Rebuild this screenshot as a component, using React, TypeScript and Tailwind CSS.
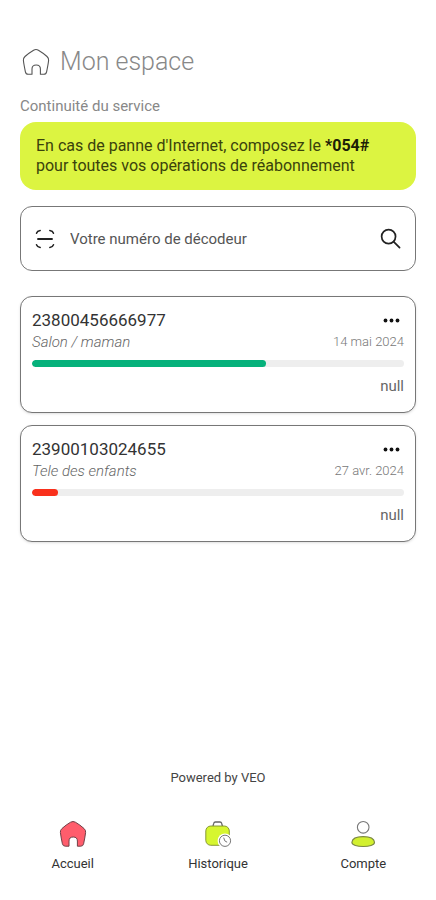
import { useState } from 'react';

interface Decoder {
  id: string;
  label: string;
  date: string;
  offer: string;
  progress: number;
  barClass: string;
}

const decoders: Decoder[] = [
  {
    id: '23800456666977',
    label: 'Salon / maman',
    date: '14 mai 2024',
    offer: 'null',
    progress: 63,
    barClass: 'bg-[#06b17b]',
  },
  {
    id: '23900103024655',
    label: 'Tele des enfants',
    date: '27 avr. 2024',
    offer: 'null',
    progress: 7,
    barClass: 'bg-[#f9301c]',
  },
];

function HomeIcon({ className, filled = false }: { className?: string; filled?: boolean }) {
  return (
    <svg viewBox="0 0 28 28" className={className} fill="none" aria-hidden="true">
      <path
        d="M11.6 2.2 Q14 0.8 16.4 2.2 C19.5 4 22.5 6.2 25 8.5 Q27 10.3 26.6 12.5 C26.2 16 25.4 20 24.6 23.8 Q24.1 26.2 21.7 26.2 H18.4 V21 Q18.4 17 14.2 17 Q10 17 10 21 V26.2 H6.3 Q3.9 26.2 3.4 23.8 C2.6 20 1.8 16 1.4 12.5 Q1 10.3 3 8.5 C5.5 6.2 8.5 4 11.6 2.2 Z"
        fill={filled ? '#ff5d6c' : 'none'}
        stroke={filled ? '#704047' : '#555555'}
        strokeWidth={filled ? 1 : 1.1}
        strokeLinejoin="round"
      />
    </svg>
  );
}

function HistoryIcon({ className }: { className?: string }) {
  return (
    <svg viewBox="0 0 28 28" className={className} fill="none" aria-hidden="true">
      <path d="M9 6 L9.8 3.2 Q10.1 2 11.4 2 H16 Q17.3 2 17.6 3.2 L18.4 6" stroke="#666666" strokeWidth="1.3" />
      <rect x="1.8" y="6" width="23.5" height="19.3" rx="5" fill="#d6f62f" stroke="#7d8d2b" strokeWidth="0.9" />
      <circle cx="21" cy="20.8" r="7.4" fill="#ffffff" />
      <circle cx="21" cy="20.8" r="5.6" fill="#ffffff" stroke="#777777" strokeWidth="1" />
      <path d="M19.8 18 L20.8 20.9 L22.8 22" stroke="#777777" strokeWidth="1" strokeLinecap="round" />
    </svg>
  );
}

function AccountIcon({ className }: { className?: string }) {
  return (
    <svg viewBox="0 0 28 28" className={className} fill="none" aria-hidden="true">
      <circle cx="14.2" cy="7.3" r="5.8" stroke="#777777" strokeWidth="1.1" />
      <path
        d="M2.9 22.3 C3.2 18.3 8.5 16.6 14.2 16.6 C19.9 16.6 25.2 18.3 25.5 22.3 C25.6 25.3 20 26.5 14.2 26.5 C8.4 26.5 2.8 25.3 2.9 22.3 Z"
        fill="#d2f02f"
        stroke="#7b8745"
        strokeWidth="1.1"
      />
    </svg>
  );
}

function ScanIcon({ className }: { className?: string }) {
  return (
    <svg viewBox="0 0 20 20" className={className} fill="none" stroke="#222222" strokeLinecap="round" aria-hidden="true">
      <g strokeWidth="1.5">
        <path d="M1.5 4.2 Q2.2 2 5.2 1.5" />
        <path d="M14.8 1.5 Q17.8 2 18.5 4.2" />
        <path d="M1.5 15.8 Q2.2 18 5.2 18.5" />
        <path d="M14.8 18.5 Q17.8 18 18.5 15.8" />
      </g>
      <path d="M3 10 H17" strokeWidth="1.9" />
    </svg>
  );
}

function DecoderCard({ decoder }: { decoder: Decoder }) {
  return (
    <li className="rounded-xl border border-[#777777] bg-white px-[11px] pt-[11px] pb-4 shadow-sm">
      <div className="flex items-center justify-between">
        <h2 className="text-[17px] leading-6 text-[#333333]">{decoder.id}</h2>
        <button type="button" aria-label="Options" className="flex h-6 items-center pr-1">
          <svg viewBox="0 0 17 5" className="h-[5px] w-[17px] fill-[#111111]" aria-hidden="true">
            <circle cx="2.5" cy="2.5" r="1.9" />
            <circle cx="8.5" cy="2.5" r="1.9" />
            <circle cx="14.5" cy="2.5" r="1.9" />
          </svg>
        </button>
      </div>
      <div className="flex items-center justify-between">
        <p className="text-[15px] leading-5 font-light text-[#666666] italic">{decoder.label}</p>
        <p className="text-[13px] leading-5 font-light text-[#777777]">{decoder.date}</p>
      </div>
      <div className="mt-2 h-[7px] overflow-hidden rounded-full bg-[#eeeeee]">
        <div className={`h-full rounded-full ${decoder.barClass}`} style={{ width: `${decoder.progress}%` }} />
      </div>
      <p className="mt-[9px] text-right text-[15px] leading-5 text-[#666666]">{decoder.offer}</p>
    </li>
  );
}

const tabs = [
  { label: 'Accueil', icon: <HomeIcon filled className="size-7" /> },
  { label: 'Historique', icon: <HistoryIcon className="size-7" /> },
  { label: 'Compte', icon: <AccountIcon className="size-7" /> },
];

export default function App() {
  const [query, setQuery] = useState('');

  return (
    <div className="flex min-h-screen flex-col bg-white font-[Roboto,sans-serif]">
      <main className="flex-1 px-5 pt-[46px]">
        <header className="flex items-center gap-2">
          <HomeIcon className="size-8 p-0.5" />
          <h1 className="text-[25px] leading-8 font-light text-[#888888]">Mon espace</h1>
        </header>

        {/* Service notice */}
        <p className="mt-[18px] text-[15px] leading-5 text-[#888888]">Continuité du service</p>
        <div className="mt-[6px] rounded-2xl bg-[#dcf441] px-4 py-[14px] text-base leading-5 text-[#3a420c]">
          <p>
            En cas de panne d'Internet, composez le <b className="text-[#1c2006]">*054#</b>
            <br />
            pour toutes vos opérations de réabonnement
          </p>
        </div>

        {/* Search */}
        <form
          className="mt-4 flex h-[65px] items-center rounded-xl border border-[#777777] px-[14px]"
          onSubmit={(e) => e.preventDefault()}
        >
          <button type="button" aria-label="Scanner">
            <ScanIcon className="size-5" />
          </button>
          <input
            type="text"
            aria-label="Votre numéro de décodeur"
            placeholder="Votre numéro de décodeur"
            value={query}
            onChange={(e) => setQuery(e.target.value)}
            className="ml-[15px] min-w-0 flex-1 text-[15px] leading-5 text-[#444444] outline-none placeholder:text-[#555555]"
          />
          <button type="submit" aria-label="Rechercher">
            <svg viewBox="0 0 22 22" className="size-[21px]" fill="none" stroke="#222222" strokeWidth="1.8" aria-hidden="true">
              <circle cx="9" cy="9" r="7.3" />
              <path d="M14.2 14.2 L20.5 20.5" strokeLinecap="round" />
            </svg>
          </button>
        </form>

        {/* Decoders */}
        <ul className="mt-[25px] flex flex-col gap-3">
          {decoders.map((decoder) => (
            <DecoderCard key={decoder.id} decoder={decoder} />
          ))}
        </ul>
      </main>

      <p className="text-center text-[13px] leading-4 text-[#444444]">Powered by VEO</p>

      <nav className="mt-[34px] grid grid-cols-3 pb-7">
        {tabs.map((tab) => (
          <a key={tab.label} href="#" className="flex flex-col items-center gap-2 text-[13px] leading-4 text-[#333333]">
            {tab.icon}
            {tab.label}
          </a>
        ))}
      </nav>
    </div>
  );
}
